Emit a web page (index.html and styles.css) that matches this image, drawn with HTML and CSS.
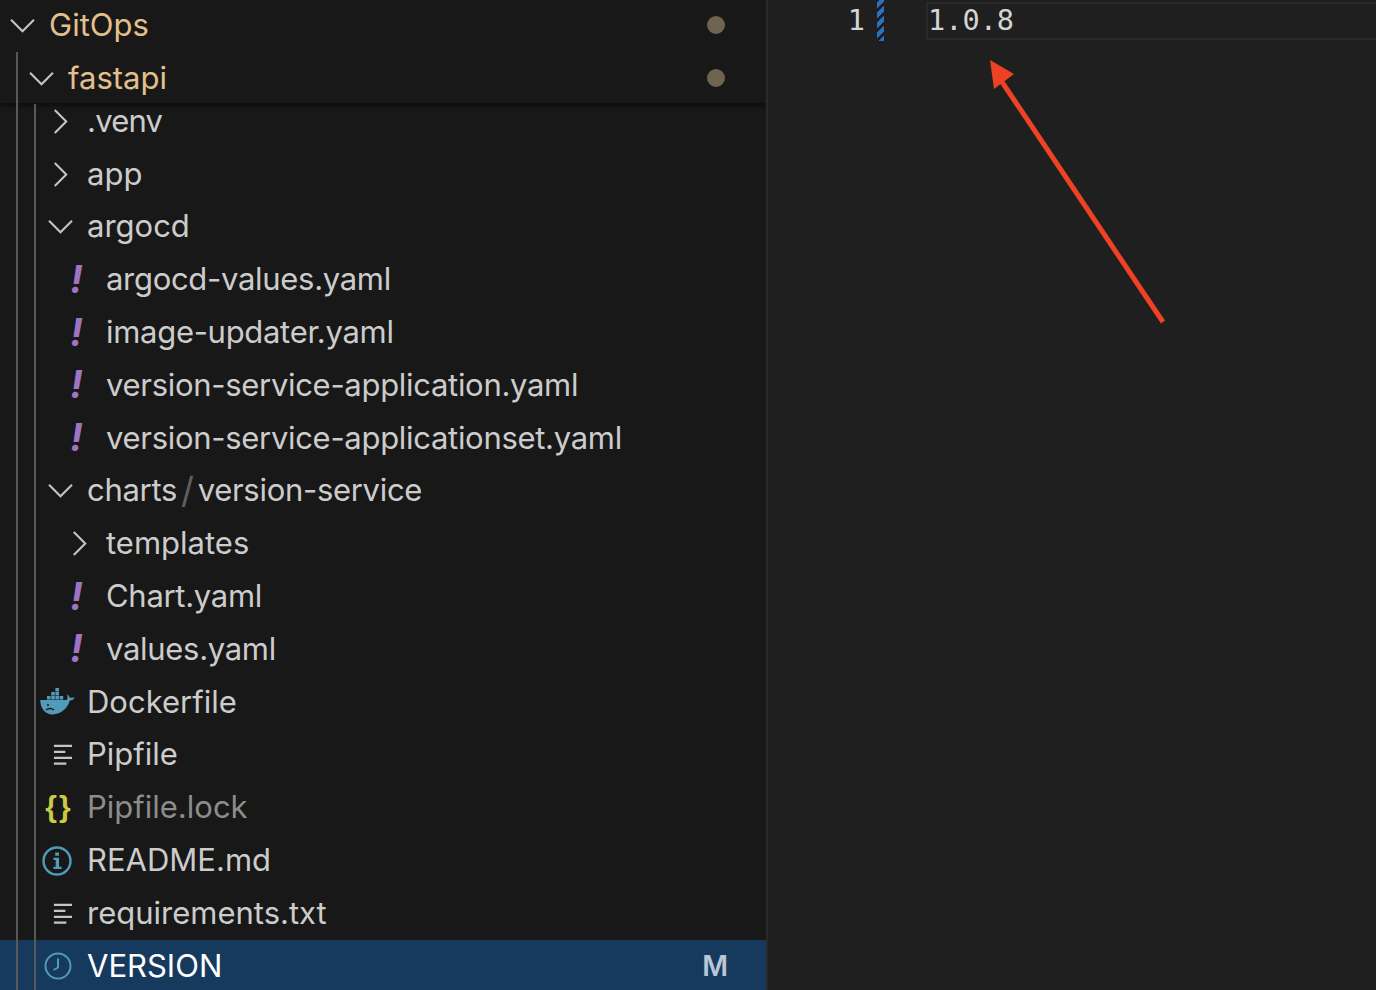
FILE: index.html
```html
<!DOCTYPE html>
<html lang="en">
<head>
<meta charset="utf-8">
<title>GitOps</title>
<link rel="stylesheet" href="styles.css">
</head>
<body>
<div class="window">
  <aside class="sidebar">
    <div class="sticky">
      <div class="row depth0 folder-mod">
        <span class="twisty"><svg viewBox="0 0 24 24"><path d="M1 6.500 12 17.500 23 6.500"/></svg></span>
        <span class="label">GitOps</span><span class="dot"></span>
      </div>
      <div class="row depth1 folder-mod">
        <span class="twisty"><svg viewBox="0 0 24 24"><path d="M1 6.500 12 17.500 23 6.500"/></svg></span>
        <span class="label">fastapi</span><span class="dot"></span>
      </div>
    </div>
    <div class="tree">
      <div class="row depth2 tighter"><span class="twisty"><svg viewBox="0 0 24 24"><path d="M6.500 1 17.500 12 6.500 23"/></svg></span><span class="label">.venv</span></div>
      <div class="row depth2"><span class="twisty"><svg viewBox="0 0 24 24"><path d="M6.500 1 17.500 12 6.500 23"/></svg></span><span class="label">app</span></div>
      <div class="row depth2"><span class="twisty"><svg viewBox="0 0 24 24"><path d="M1 6.500 12 17.500 23 6.500"/></svg></span><span class="label">argocd</span></div>
      <div class="row depth3 yaml"><span class="twisty"><span class="bang">!</span></span><span class="label">argocd-values.yaml</span></div>
      <div class="row depth3 yaml"><span class="twisty"><span class="bang">!</span></span><span class="label">image-updater.yaml</span></div>
      <div class="row depth3 yaml"><span class="twisty"><span class="bang">!</span></span><span class="label">version-service-application.yaml</span></div>
      <div class="row depth3 yaml"><span class="twisty"><span class="bang">!</span></span><span class="label">version-service-applicationset.yaml</span></div>
      <div class="row depth2 yaml"><span class="twisty"><svg viewBox="0 0 24 24"><path d="M1 6.500 12 17.500 23 6.500"/></svg></span><span class="label">charts<span class="slash">/</span>version-service</span></div>
      <div class="row depth3"><span class="twisty"><svg viewBox="0 0 24 24"><path d="M6.500 1 17.500 12 6.500 23"/></svg></span><span class="label">templates</span></div>
      <div class="row depth3 yaml"><span class="twisty"><span class="bang">!</span></span><span class="label">Chart.yaml</span></div>
      <div class="row depth3 yaml"><span class="twisty"><span class="bang">!</span></span><span class="label">values.yaml</span></div>
      <div class="row depth2"><span class="twisty"><svg class="wide docker" viewBox="0 0 35 26"><path class="fill-docker" d="M.3 11h25.500c1.200-.2 1.700-1 1.700-2 .1-1.300-.2-2.600-.8-3.800 1.600.7 2.800 2 3.200 3.500 1.500.3 3.200 0 4.800-.5-.8 2.100-2.500 3.200-4.900 3.400C28 19 21 25.500 12.500 25.500 5 25.500 .2 19 .3 11Z"/><path class="fill-docker" d="M7 7h3.600v3.600H7zM11.200 7h3.600v3.600h-3.600zM15.400 7h3.600v3.600h-3.600zM19.600 7h3.600v3.600h-3.600zM11.200 3h3.600v3.600h-3.600zM15.400 3h3.600v3.600h-3.600zM15.400-1h3.600v3.600h-3.600z"/><path class="cut" d="M6 21c2.500-1.800 5.500-1.800 8 0"/><circle class="eye" cx="8" cy="16" r="1"/></svg></span><span class="label">Dockerfile</span></div>
      <div class="row depth2"><span class="twisty"><svg class="lines" viewBox="0 0 22 22"><path d="M2 2H21M2 8.300H14M2 14.600H21M2 20.500H15"/></svg></span><span class="label">Pipfile</span></div>
      <div class="row depth2 ignored"><span class="twisty"><span class="braces">{}</span></span><span class="label">Pipfile.lock</span></div>
      <div class="row depth2"><span class="twisty"><svg class="wide info" viewBox="0 0 30 30"><circle cx="15" cy="15" r="13.500"/><path class="info-i" d="M11.500 11.800h5.500v9h2.500v2.200h-8v-2.200h2.200v-6.800h-2.200ZM13.200 6.500h3.800v3.300h-3.800Z"/></svg></span><span class="label">README.md</span></div>
      <div class="row depth2"><span class="twisty"><svg class="lines" viewBox="0 0 22 22"><path d="M2 2H21M2 8.300H14M2 14.600H21M2 20.500H15"/></svg></span><span class="label">requirements.txt</span></div>
      <div class="row depth2 selected"><span class="twisty"><svg class="wide clock" viewBox="0 0 28 28"><circle cx="14" cy="14" r="12.500"/><path d="M14 6.500V15.500L9.500 18"/></svg></span><span class="label">VERSION</span><span class="badge">M</span></div>
    </div>
    <div class="guide guide-a"></div>
    <div class="guide guide-b"></div>
  </aside>
  <main class="editor">
    <div class="line">
      <span class="line-no">1</span>
      <span class="diff"></span>
      <span class="code">1.0.8</span>
    </div>
    <svg class="arrow" viewBox="0 0 200 280"><path class="shaft" d="M173 270 10 27"/><path class="head" d="M0 8 24 22 4 37Z"/></svg>
  </main>
</div>
</body>
</html>
```
FILE: styles.css
```css
* { box-sizing: border-box; }
html, body { margin: 0; height: 100%; overflow: hidden; background: #1f1f1f; }
.window { display: flex; height: 990px; width: 1376px; overflow: hidden; font-family: Inter, "Liberation Sans", sans-serif; }

.sidebar { position: relative; width: 768px; flex: none; background: #181818; border-right: 2px solid #2a2a2a; overflow: hidden; }
.sticky { position: relative; z-index: 2; height: 104px; margin-top: -1px; background: #181818; box-shadow: 0 3px 4px rgba(0,0,0,.45); }
.tree { margin-top: -8px; }

.row { display: flex; align-items: center; height: 52.8px; font-size: 31px; color: #cccccc; white-space: nowrap; }
.depth0 { padding-left: 10px; }
.depth1 { padding-left: 29px; }
.depth2 { padding-left: 48px; }
.depth3 { padding-left: 67px; }
.yaml { letter-spacing: -0.3px; }
.tighter { letter-spacing: -0.8px; }
.twisty { display: flex; align-items: center; justify-content: center; width: 25px; height: 30px; margin-right: 14px; flex: none; position: relative; letter-spacing: 0; }
.twisty svg { width: 25px; height: 25px; fill: none; stroke: #c5c5c5; stroke-width: 2; overflow: visible; }
.label { flex: 1; margin-top: -2px; }
.folder-mod { color: #e2c08d; }
.dot { width: 18px; height: 18px; border-radius: 50%; background: #6f6450; margin-right: 41px; flex: none; }
.ignored .label { color: #8c8c8c; }
.slash { color: #5f5f5f; margin: 0 4px; font-size: 36px; line-height: 1; vertical-align: -2px; }
.bang { color: #a074c4; font-weight: 700; font-style: italic; font-size: 38px; line-height: 1; margin-left: -6px; margin-top: -2px; }
.braces { color: #cbcb41; font-weight: 700; font-size: 30px; letter-spacing: 2px; white-space: nowrap; margin-left: -3px; margin-top: -2px; font-family: "Liberation Sans", sans-serif; }

.twisty svg.lines { width: 21px; height: 21px; stroke: #c5c5c5; stroke-width: 2.400; margin-left: 3px; }
.twisty svg.wide { flex: none; width: 34px; height: 30px; stroke: none; margin-left: -7px; }
.twisty svg.docker { width: 35px; height: 26px; margin-top: 0; margin-left: -6px; }
.fill-docker { fill: #519aba; }
.cut { stroke: #181818; stroke-width: 1.500; fill: none; }
.eye { fill: #181818; }
.twisty svg.info circle { fill: none; stroke: #519aba; stroke-width: 2.400; }
.info-i { fill: #519aba; stroke: none; }
.twisty svg.clock { fill: none; stroke: #519aba; stroke-width: 2; width: 28px; height: 28px; margin-left: -5px; }

.selected { background: #163a5e; color: #ffffff; }
.badge { color: #b9c6d5; font-weight: 600; font-size: 28px; margin-right: 38px; flex: none; }

.guide { position: absolute; z-index: 3; width: 2px; bottom: 0; background: #585858; }
.guide-a { left: 16px; top: 52px; }
.guide-b { left: 34px; top: 104px; }

.editor { position: relative; flex: 1; background: #1f1f1f; }
.line { display: flex; height: 41px; font-family: "DejaVu Sans Mono", monospace; font-size: 28.600px; color: #d4d4d4; }
.line-no { width: 97px; text-align: right; line-height: 40px; flex: none; }
.diff { width: 7px; margin-left: 12px; flex: none; background: repeating-linear-gradient(-45deg, #2b6fc4 0 4px, #1f1f1f 4px 7px); }
.code { flex: 1; margin-left: 42px; margin-top: 2px; height: 38px; line-height: 33px; border: 2px solid #282828; border-right: 0; }

.arrow { position: absolute; left: 222px; top: 52px; width: 200px; height: 280px; overflow: visible; }
.shaft { stroke: #ee4224; stroke-width: 5; fill: none; }
.head { fill: #ee4224; }
```
